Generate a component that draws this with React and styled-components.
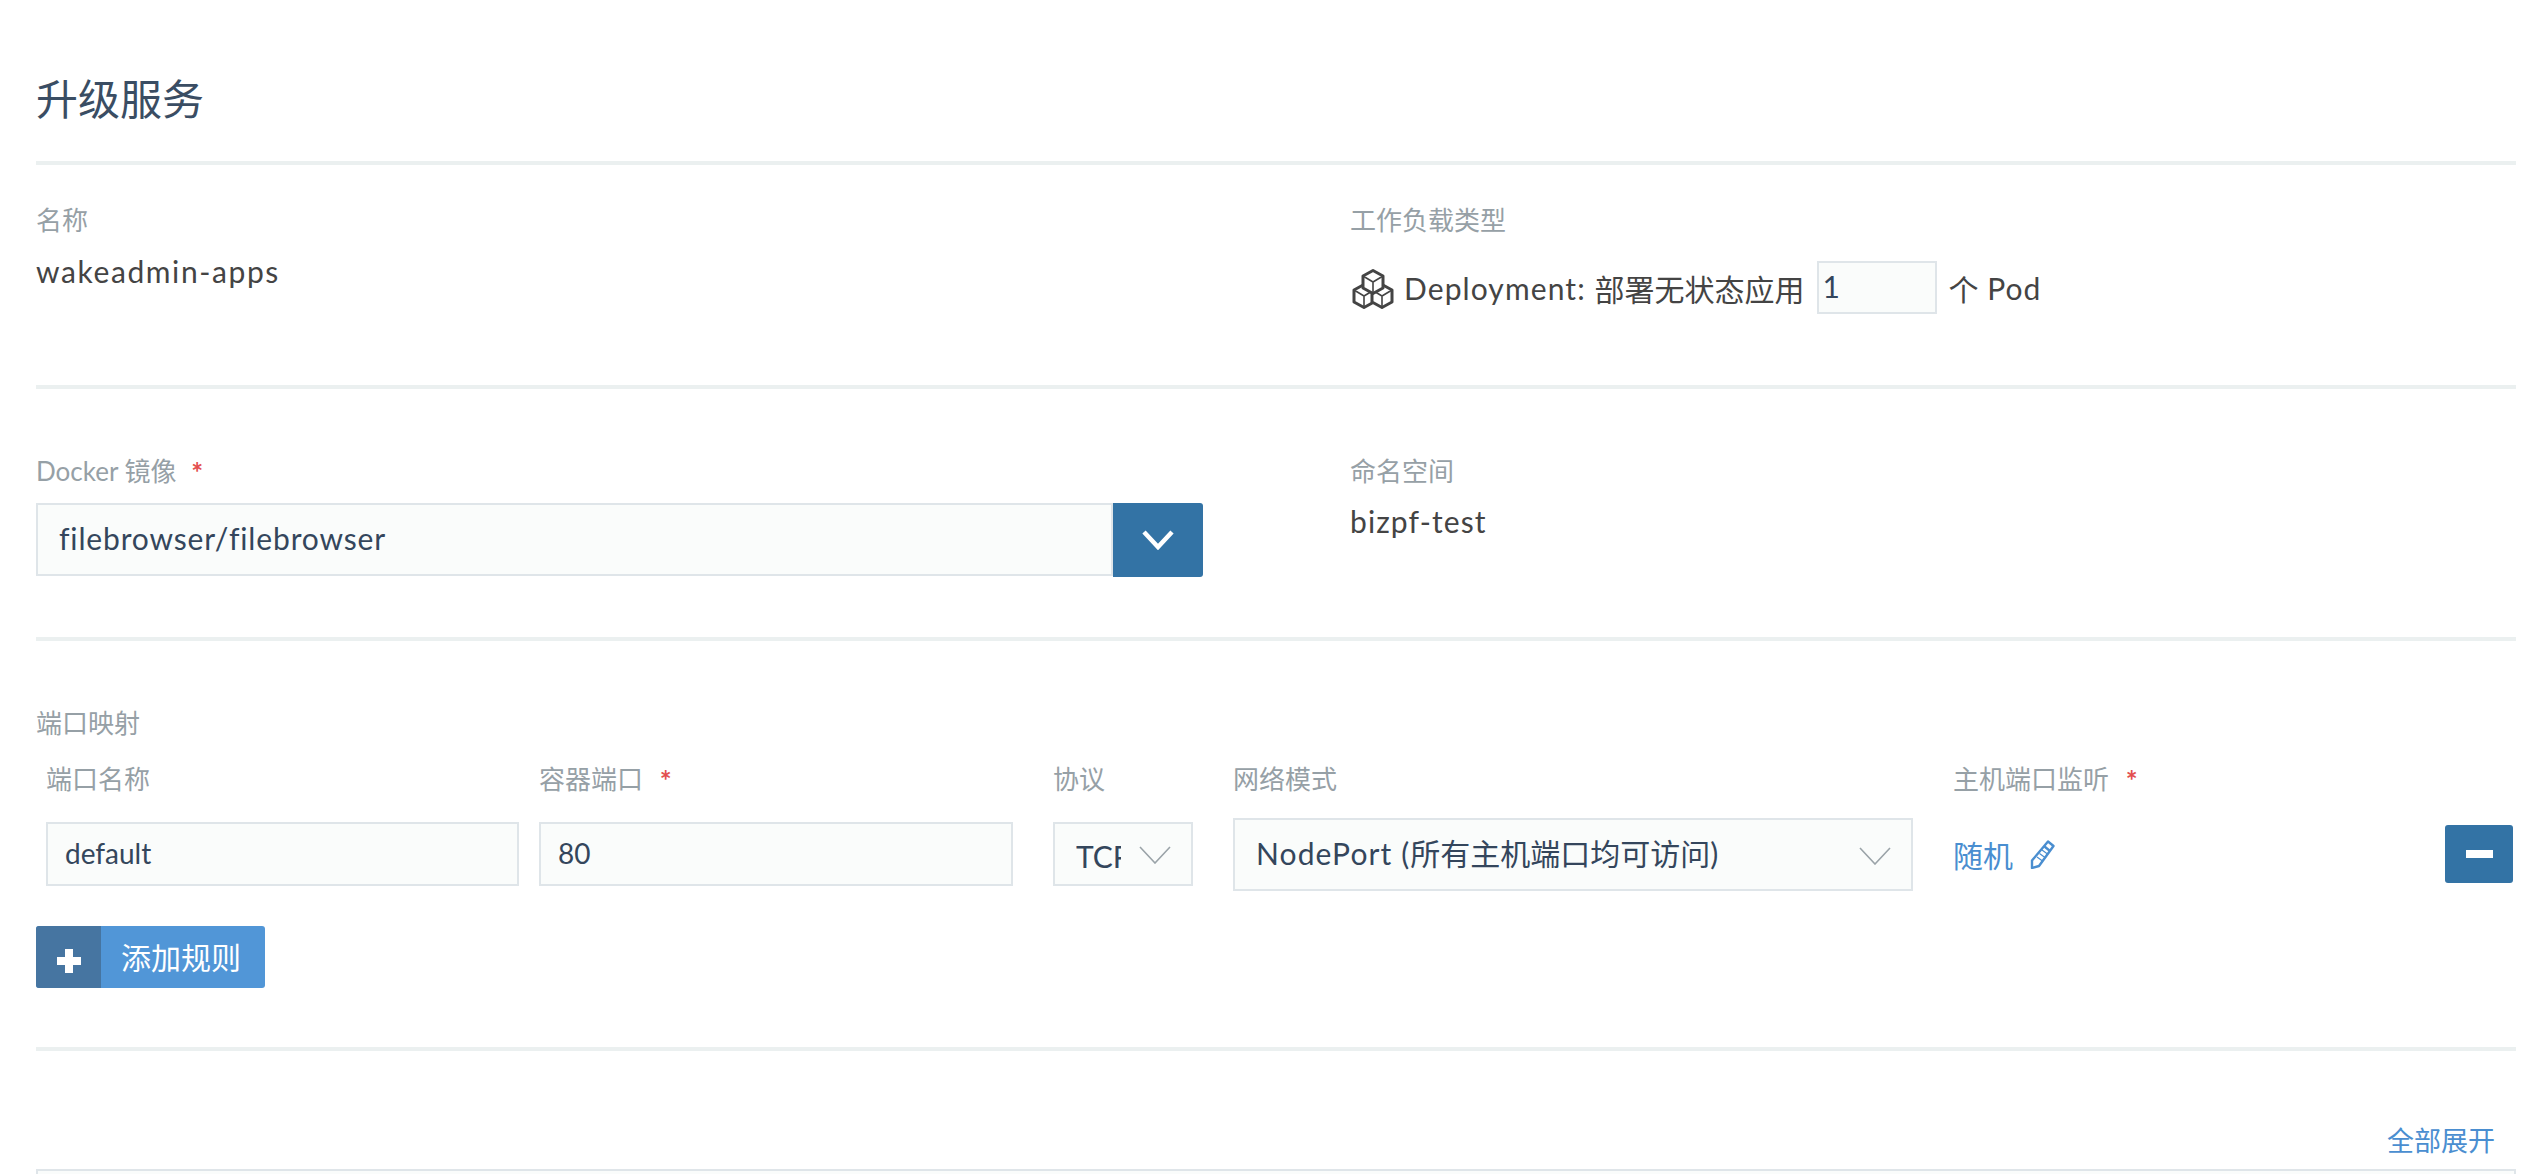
import React from "react";
import styled, { createGlobalStyle } from "styled-components";

const Global = createGlobalStyle`
  html, body { margin: 0; padding: 0; background: #fff; }
  body { font-family: Lato, "Noto Sans CJK SC", sans-serif; color: #444; overflow: hidden; height: 1174px; }
`;

const Page = styled.div`
  box-sizing: border-box;
  width: 2536px;
  height: 1174px;
  padding: 0 20px 0 36px;
  overflow: hidden;
`;

const Title = styled.h1`
  margin: 0;
  height: 161px;
  box-sizing: border-box;
  padding-top: 69px;
  font-size: 42px;
  line-height: 60px;
  font-weight: 400;
  color: #3a4d63;
`;

const Rule = styled.div`
  height: 4px;
  background: #ebf0f0;
`;

const TwoCols = styled.section`
  display: grid;
  grid-template-columns: 1314px 1fr;
  height: ${(p) => p.$h}px;
  box-sizing: border-box;
  padding-top: ${(p) => p.$top}px;
`;

const Field = styled.div`
  display: flex;
  flex-direction: column;
  min-width: 0;
`;

const Label = styled.div`
  font-size: 26px;
  line-height: 34px;
  color: #96a0a6;
  white-space: nowrap;
`;

const Star = styled.span`
  display: inline-block;
  color: #e34f4f;
  font-size: 28px;
  line-height: 26px;
  font-weight: 700;
  margin-left: ${(p) => p.$gap || 8}px;
  transform: translateY(2px);
`;

const Value = styled.div`
  font-size: 30px;
  line-height: 40px;
  margin-top: ${(p) => p.$top || 14}px;
  letter-spacing: ${(p) => p.$ls || 0}px;
  color: #444;
  white-space: nowrap;
`;

const WorkloadRow = styled.div`
  display: flex;
  align-items: center;
  margin-top: 24px;
  height: 53px;
  font-size: 30px;
  color: #444;
  white-space: nowrap;
`;

const WorkloadIcon = styled.svg`
  width: 42px;
  height: 42px;
  margin: 2px 10px 0 2px;
  flex: none;
`;

const Latin = styled.span`
  letter-spacing: ${(p) => p.$ls}px;
  white-space: pre;
`;

const ScaleBox = styled.div`
  box-sizing: border-box;
  width: 120px;
  height: 53px;
  margin: 0 12px 0 12px;
  border: 2px solid #dfe5e9;
  background: #fafcfb;
  padding-left: 4px;
  color: #34465c;
  line-height: 46px;
  flex: none;
`;

const ImageGroup = styled.div`
  display: flex;
  width: 1167px;
  height: 74px;
  margin-top: 15px;
`;

const ImageBox = styled.div`
  flex: 1;
  box-sizing: border-box;
  height: 73px;
  border: 2px solid #dfe5e9;
  background: #fafcfb;
  padding-left: 21px;
  font-size: 30px;
  line-height: 67px;
  letter-spacing: 0.85px;
  color: #34465c;
`;

const IconBtn = styled.button`
  display: flex;
  align-items: center;
  justify-content: center;
  width: ${(p) => p.$w}px;
  height: ${(p) => p.$h}px;
  border: 0;
  padding: 0;
  background: #3373a5;
  border-radius: ${(p) => p.$round || "3px"};
`;

const PortSection = styled.section`
  height: 406px;
  box-sizing: border-box;
  padding-top: 65px;
`;

const PortGrid = styled.div`
  display: grid;
  grid-template-columns: 493px 514px 180px 720px 1fr 68px;
  grid-template-rows: 34px 74px;
  row-gap: 21px;
  align-items: center;
  padding: 0 3px 0 10px;
  margin-top: 22px;
`;

const Box = styled.div`
  box-sizing: border-box;
  position: relative;
  width: ${(p) => p.$w}px;
  height: ${(p) => p.$h}px;
  border: 2px solid #dfe5e9;
  background: #fafcfb;
  color: #34465c;
  font-size: ${(p) => p.$fs}px;
  line-height: ${(p) => p.$h - 6}px;
  padding-left: ${(p) => p.$pl}px;
  white-space: nowrap;
`;

const Clip = styled.div`
  width: ${(p) => p.$w}px;
  overflow: hidden;
  margin-top: ${(p) => p.$top}px;
`;

const Chevron = styled.svg`
  position: absolute;
  right: 20px;
  top: ${(p) => p.$top}px;
  width: 32px;
  height: 18px;
`;

const HostCell = styled.div`
  display: flex;
  align-items: center;
  font-size: 30px;
  color: #4a8ed0;
`;

const Pencil = styled.svg`
  width: 26px;
  height: 30px;
  margin-left: 16px;
`;

const AddButton = styled.button`
  display: flex;
  align-items: stretch;
  width: 229px;
  height: 62px;
  margin-top: 35px;
  padding: 0;
  border: 0;
  border-radius: 3px;
  overflow: hidden;
  background: #5196d7;
  color: #fff;
  font-family: inherit;
  font-size: 30px;
`;

const AddIcon = styled.span`
  display: flex;
  align-items: center;
  justify-content: center;
  width: 65px;
  padding-top: 8px;
  box-sizing: border-box;
  background: #4675a1;
`;

const AddText = styled.span`
  flex: 1;
  line-height: 62px;
  text-align: left;
  padding-left: 20px;
`;

const Footer = styled.div`
  display: flex;
  justify-content: flex-end;
  height: 118px;
  box-sizing: border-box;
  padding: 73px 21px 0 0;
  font-size: 27px;
  line-height: 34px;
  color: #4a8ed0;
`;

const Panel = styled.div`
  height: 20px;
  border: 2px solid #dfe5e9;
  border-bottom: 0;
  background: #fafcfb;
`;

const cube = (cx, cy) => (
  <g key={`${cx}-${cy}`}>
    <path d={`M${cx} ${cy - 11.5}L${cx + 10} ${cy - 6}V${cy + 6}L${cx} ${cy + 11.5}L${cx - 10} ${cy + 6}V${cy - 6}Z`} />
    <path strokeWidth="1.6" d={`M${cx - 10} ${cy - 6}L${cx} ${cy}L${cx + 10} ${cy - 6}M${cx} ${cy}V${cy + 11.5}`} />
  </g>
);

const V = ({ color = "#9aa3a8", width = 1.6 }) => (
  <path d="M1 1L16 17L31 1" fill="none" stroke={color} strokeWidth={width} />
);

export default function App() {
  return (
    <Page>
      <Global />
      <Title>升级服务</Title>
      <Rule />
      <TwoCols $h={220} $top={38}>
        <Field>
          <Label>名称</Label>
          <Value $ls={1.6}>wakeadmin-apps</Value>
        </Field>
        <Field>
          <Label>工作负载类型</Label>
          <WorkloadRow>
            <WorkloadIcon viewBox="0 0 42 42" fill="#fff" stroke="#444" strokeWidth="3" strokeLinejoin="round">
              {cube(12, 28)}
              {cube(30, 28)}
              {cube(21, 14)}
            </WorkloadIcon>
            <Latin $ls={1.1}>Deployment: </Latin>部署无状态应用
            <ScaleBox>1</ScaleBox>
            个 <Latin $ls={1}> Pod</Latin>
          </WorkloadRow>
        </Field>
      </TwoCols>
      <Rule />
      <TwoCols $h={248} $top={65}>
        <Field>
          <Label>Docker 镜像 <Star $gap={8}>*</Star></Label>
          <ImageGroup>
            <ImageBox>filebrowser/filebrowser</ImageBox>
            <IconBtn $w={90} $h={74} $round="0 3px 3px 0" aria-label="展开">
              <svg width="32" height="20" viewBox="0 0 32 20">
                <path d="M2 2L16 17L30 2" fill="none" stroke="#fff" strokeWidth="4.5" />
              </svg>
            </IconBtn>
          </ImageGroup>
        </Field>
        <Field>
          <Label>命名空间</Label>
          <Value $ls={1.1} $top={13}>bizpf-test</Value>
        </Field>
      </TwoCols>
      <Rule />
      <PortSection>
        <Label>端口映射</Label>
        <PortGrid>
          <Label>端口名称</Label>
          <Label>容器端口 <Star $gap={10}>*</Star></Label>
          <Label>协议</Label>
          <Label>网络模式</Label>
          <Label>主机端口监听 <Star $gap={10}>*</Star></Label>
          <span />
          <Box $w={473} $h={64} $fs={28} $pl={17}>default</Box>
          <Box $w={474} $h={64} $fs={28} $pl={17}>80</Box>
          <Box $w={140} $h={64} $fs={30} $pl={21}>
            <Clip $w={45} $top={3}>TCP</Clip>
            <Chevron $top={22} viewBox="0 0 32 18"><V /></Chevron>
          </Box>
          <Box $w={680} $h={73} $fs={30} $pl={21}>
            <Latin $ls={1.1}>NodePort (</Latin>所有主机端口均可访问)
            <Chevron $top={27} viewBox="0 0 32 18"><V /></Chevron>
          </Box>
          <HostCell>
            随机
            <Pencil viewBox="0 0 26 30">
              <g fill="none" stroke="#4a8ed0" strokeWidth="2.4" strokeLinejoin="round">
                <path d="M19 2.5L24.5 7L10 27L3 29L3 21.5Z" />
                <path d="M15.5 7.5L21 12" />
                <path strokeWidth="1.2" d="M8 18L13.5 22M10.5 14.5L16 18.5M13 11L18.5 15" />
              </g>
            </Pencil>
          </HostCell>
          <IconBtn $w={68} $h={58} aria-label="删除">
            <svg width="27" height="8" viewBox="0 0 27 8"><rect width="27" height="8" fill="#fff" /></svg>
          </IconBtn>
        </PortGrid>
        <AddButton>
          <AddIcon>
            <svg width="24" height="24" viewBox="0 0 24 24">
              <path d="M8 0h8v8h8v8h-8v8h-8v-8h-8v-8h8z" fill="#fff" />
            </svg>
          </AddIcon>
          <AddText>添加规则</AddText>
        </AddButton>
      </PortSection>
      <Rule />
      <Footer>全部展开</Footer>
      <Panel />
    </Page>
  );
}
